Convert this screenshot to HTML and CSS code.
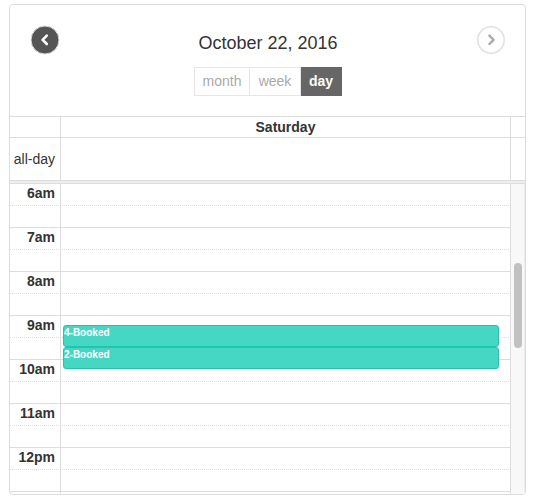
FILE: index.html
```html
<!DOCTYPE html>
<html>
<head>
<meta charset="utf-8">
<link rel="stylesheet" href="styles.css">
</head>
<body>
<div class="cal">
  <div class="toolbar">
    <button class="nav prev" aria-label="prev">
      <svg width="30" height="30" viewBox="0 0 30 30"><circle cx="15" cy="15" r="14" fill="#555" stroke="#ddd" stroke-width="1"/><path d="M16.8 10.6 L12.6 14.8 L16.8 19" fill="none" stroke="#fff" stroke-width="2.6" stroke-linecap="round" stroke-linejoin="round"/></svg>
    </button>
    <div class="center">
      <h2 class="title">October 22, 2016</h2>
      <div class="views">
        <span class="view v-month">month</span><span class="view v-week">week</span><span class="view v-day active">day</span>
      </div>
    </div>
    <button class="nav next" aria-label="next">
      <svg width="30" height="30" viewBox="0 0 30 30"><circle cx="15" cy="15" r="13.2" fill="#fff" stroke="#e2e2e2" stroke-width="1.6"/><path d="M13.4 10.6 L17.6 14.8 L13.4 19" fill="none" stroke="#aaa" stroke-width="2.4" stroke-linecap="round" stroke-linejoin="round"/></svg>
    </button>
  </div>
  <div class="grid">
    <div class="row head">
      <div class="gut"></div>
      <div class="main dayname">Saturday</div>
      <div class="sb"></div>
    </div>
    <div class="row allday">
      <div class="gut allday-label">all-day</div>
      <div class="main"></div>
      <div class="sb"></div>
    </div>
    <div class="divider"></div>
    <div class="body">
      <div class="slots">
        <div class="slot hour"><div class="gut label">6am</div><div class="main"></div></div>
        <div class="slot half"><div class="gut"></div><div class="main"></div></div>
        <div class="slot hour"><div class="gut label">7am</div><div class="main"></div></div>
        <div class="slot half"><div class="gut"></div><div class="main"></div></div>
        <div class="slot hour"><div class="gut label">8am</div><div class="main"></div></div>
        <div class="slot half"><div class="gut"></div><div class="main"></div></div>
        <div class="slot hour"><div class="gut label">9am</div><div class="main"></div></div>
        <div class="slot half"><div class="gut"></div><div class="main"></div></div>
        <div class="slot hour"><div class="gut label">10am</div><div class="main"></div></div>
        <div class="slot half"><div class="gut"></div><div class="main"></div></div>
        <div class="slot hour"><div class="gut label">11am</div><div class="main"></div></div>
        <div class="slot half"><div class="gut"></div><div class="main"></div></div>
        <div class="slot hour"><div class="gut label">12pm</div><div class="main"></div></div>
        <div class="slot half"><div class="gut"></div><div class="main"></div></div>
        <div class="slot hour"><div class="gut"></div><div class="main"></div></div>
        <div class="events">
          <div class="event ev1">4-Booked</div>
          <div class="event ev2">2-Booked</div>
        </div>
      </div>
      <div class="scrollbar"><div class="thumb"></div></div>
    </div>
  </div>
</div>
</body>
</html>
```

FILE: styles.css
```css
* { box-sizing: border-box; }
html, body { margin: 0; padding: 0; background: #fff; }
body {
  font-family: "Liberation Sans", Arial, sans-serif;
  color: #333;
  padding: 4px 0 0 9px;
}
.cal {
  width: 517px;
  height: 491px;
  border: 1px solid #ddd;
  border-radius: 4px;
  overflow: hidden;
  display: flex;
  flex-direction: column;
}
.toolbar {
  height: 111px;
  flex: none;
  display: flex;
  justify-content: space-between;
  align-items: flex-start;
  padding: 20px 19px 0 20px;
}
.nav {
  border: 0;
  background: none;
  padding: 0;
  margin: 0;
  width: 30px;
  height: 30px;
  display: block;
}
.nav svg { display: block; }
.center {
  display: flex;
  flex-direction: column;
  align-items: center;
  padding-top: 7px;
}
.title {
  margin: 0;
  font-size: 18px;
  line-height: 22px;
  font-weight: normal;
  color: #333;
}
.views {
  display: flex;
  margin-top: 13px;
}
.view {
  display: block;
  height: 29px;
  line-height: 27px;
  font-size: 14px;
  color: #aaa;
  border: 1px solid #e6e6e6;
  text-align: center;
}
.v-month { width: 56px; }
.v-week { width: 51px; border-left: 0; }
.v-day { width: 41px; border-left: 0; }
.view.active {
  background: #666;
  border-color: #666;
  color: #fff;
  font-weight: bold;
}
.grid {
  border-top: 1px solid #ddd;
  flex: 1;
  display: flex;
  flex-direction: column;
  min-height: 0;
}
.row {
  display: grid;
  grid-template-columns: 51px 450px 14px;
  border-bottom: 1px solid #ddd;
}
.gut { border-right: 1px solid #ddd; }
.row .main { border-right: 1px solid #ddd; }
.head { height: 21px; }
.dayname {
  text-align: center;
  font-weight: bold;
  font-size: 14px;
  line-height: 20px;
}
.allday { height: 43px; }
.allday-label {
  font-size: 14px;
  text-align: right;
  padding-right: 5px;
  line-height: 42px;
}
.divider {
  height: 3px;
  background: #eee;
  border-bottom: 1px solid #ddd;
  flex: none;
}
.body {
  flex: 1;
  min-height: 0;
  display: flex;
  overflow: hidden;
}
.slots {
  width: 501px;
  position: relative;
  display: flex;
  flex-direction: column;
}
.slot {
  display: grid;
  grid-template-columns: 51px 450px;
  height: 22px;
  flex: none;
}
.slot .main { border-right: 1px solid #ddd; }
.slot.hour { border-bottom: 1px dotted #ddd; }
.slot.half { border-bottom: 1px solid #ddd; }
.label {
  font-size: 14px;
  font-weight: bold;
  text-align: right;
  padding-right: 5px;
  padding-top: 1px;
  line-height: 16px;
}
.events {
  position: absolute;
  left: 53px;
  top: 141px;
  width: 436px;
}
.event {
  height: 22px;
  background: #46d7c4;
  border: 1px solid #1fc6ae;
  border-radius: 3px;
  color: #fff;
  font-size: 10px;
  font-weight: bold;
  line-height: 12px;
  padding: 1px 0 0 0;
}
.scrollbar {
  width: 14px;
  flex: none;
  background: #f8f8f8;
  border-right: 1px solid #ececec;
  position: relative;
}
.thumb {
  position: absolute;
  left: 3px;
  top: 79px;
  width: 8px;
  height: 85px;
  border-radius: 4px;
  background: #c1c1c1;
}
```
